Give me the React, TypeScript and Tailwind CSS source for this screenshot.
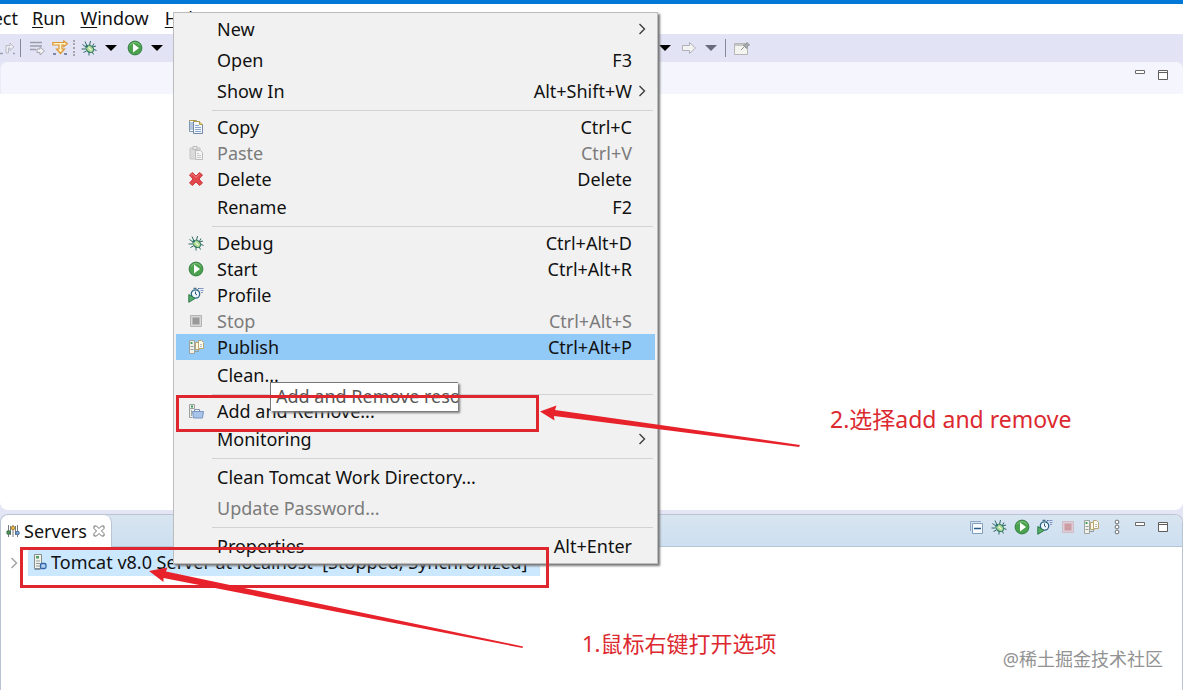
import React from "react";

type IconProps = { className?: string };

const svgBase = "block h-4 w-4 shrink-0";

function CopyIcon() {
  return (
    <svg viewBox="0 0 16 16" className={svgBase} aria-hidden="true">
      <path d="M1.500 1.500h7v11h-7z" fill="#fff" stroke="#7f96b5" />
      <path d="M1.500 1.500h6" stroke="#b39a3c" />
      <path d="M2 4h3M2 6h3M2 8h3M2 10h3" stroke="#6c8cba" />
      <path d="M5.500 2.500h6l3 3v9h-9z" fill="#f3f7fc" stroke="#7288a8" />
      <path d="M5.500 2.500h6l3 3" fill="none" stroke="#b0a04e" />
      <path d="M11.500 2.500v3h3" fill="#e6d68c" stroke="#b0a04e" />
      <path d="M7 6.500h4M7 8.500h6M7 10.500h6M7 12.500h6" stroke="#8aa6cc" />
    </svg>
  );
}

function PasteIcon() {
  return (
    <svg viewBox="0 0 16 16" className={svgBase} aria-hidden="true">
      <path d="M2 3h10v11H2z" fill="#dadada" stroke="#c6c6c6" />
      <path d="M5 1.500h4v3H5z" fill="#ededed" stroke="#b9b9b9" />
      <path d="M7.500 5.500h5l2 2v7h-7z" fill="#f3f3f3" stroke="#bcbcbc" />
      <path d="M9 8.500h2M9 10.500h4M9 12.500h4" stroke="#c9c9c9" />
    </svg>
  );
}

function DeleteIcon() {
  return (
    <svg viewBox="0 0 16 16" className={svgBase} aria-hidden="true">
      <path
        d="M1.500 4 4.500 1.500 8 5l3.500-3.500 3 2.500L11 8l3.500 4-3 2.500L8 11l-3.500 3.500-3-2.500L5 8z"
        fill="#e2474b"
        stroke="#c93a40"
        strokeLinejoin="round"
      />
      <path d="M3 4.300 4.500 3 8 6.500 11.500 3" fill="none" stroke="#f08a88" />
    </svg>
  );
}

function BugIcon() {
  return (
    <svg viewBox="0 0 16 16" className={svgBase} aria-hidden="true">
      <path
        d="M6 6 4 1.500M8.500 5.500 9.500 1M11 7l2-3.500M5 7 1.500 4.500M4.500 9H.5M5.500 11l-3 1.500M8 12v3.500M11 11.500l1.500 3M12 9l3.500 1.500M11.500 7 15 6"
        fill="none"
        stroke="#2f6a66"
      />
      <ellipse cx="8.800" cy="8.900" rx="4.200" ry="3.300" transform="rotate(38 8.800 8.900)" fill="#a9d792" stroke="#2f7462" />
      <path d="m7.500 7.500 3 2.800" stroke="#e9f7d2" strokeWidth="1.500" />
      <circle cx="5.800" cy="6.200" r="1.200" fill="#2c7475" />
    </svg>
  );
}

function RunIcon() {
  return (
    <svg viewBox="0 0 16 16" className={svgBase} aria-hidden="true">
      <circle cx="8" cy="8" r="6.900" fill="#4aa24e" stroke="#337f45" />
      <path d="M3 5.500a5.800 5.800 0 0 1 10 0" fill="none" stroke="#83c57c" />
      <path d="M6 3.500v9L12 8z" fill="#fff" />
    </svg>
  );
}

function ProfileIcon() {
  return (
    <svg viewBox="0 0 16 16" className={svgBase} aria-hidden="true">
      <circle cx="7.500" cy="7" r="4.200" fill="#edf7fc" stroke="#2d6685" strokeWidth="1.300" />
      <path d="M5.500 1.300h3M9.500 2.500l1.500-1.200M7.500 4.500V7l1.500 1" fill="none" stroke="#2a5274" />
      <path d="M11 1.500h4.500M12.500 3.500h3M13 5.500h2" stroke="#8297c7" />
      <path d="M.8 7.500v7.800L7 11.500z" fill="#55ad69" stroke="#2d7c48" />
    </svg>
  );
}

function StopIcon({ muted = false }: { muted?: boolean }) {
  return (
    <svg viewBox="0 0 16 16" className={svgBase} aria-hidden="true">
      <path d="M2.500 2.500h11v11h-11z" fill={muted ? "#dccdd6" : "#d8d8d8"} stroke={muted ? "#d0bcc6" : "#b4b4b4"} />
      <path d="M4.500 4.500h7v7h-7z" fill={muted ? "#cd9da4" : "#999"} />
    </svg>
  );
}

function PublishIcon() {
  return (
    <svg viewBox="0 0 16 16" className={svgBase} aria-hidden="true">
      <path d="M1.500 1.500h5v13h-5z" fill="#f2f2e8" stroke="#9ba3a3" />
      <path d="M2.500 7.500h3M2.500 10.500h3M6.500 12.500h4v-2" fill="none" stroke="#939d9c" />
      <path d="M2.500 3h2v2h-2z" fill="#48a263" />
      <path d="M7.500 3.500h4v7h-4z" fill="#fffbe7" stroke="#b9a673" />
      <path d="M10.500 1.500h3l2 2v6h-5z" fill="#fffdf2" stroke="#b9a673" />
      <path d="M12 5.500h2M12 7.500h2" stroke="#b4bbc0" />
    </svg>
  );
}

function AddRemoveIcon() {
  return (
    <svg viewBox="0 0 16 16" className={svgBase} aria-hidden="true">
      <path d="M1.500 1.500h5v4h-5zM1.500 5.500v9h3" fill="#eee" stroke="#9ba19d" />
      <path d="M3 2.500h2v2H3z" fill="#3c9b57" />
      <path d="M3.500 7v6" stroke="#a9aaa6" />
      <path d="M6.500 8V6.500h5V8" fill="#f3f5f9" stroke="#8290a6" />
      <path d="M4.500 8.500h11l-1 6.500h-9z" fill="#a8c4eb" stroke="#7895c3" />
    </svg>
  );
}

function StepIcon() {
  return (
    <svg viewBox="0 0 16 16" className={svgBase} aria-hidden="true">
      <path d="M0 13.500h3M13 13.500h2" stroke="#9ca0b5" strokeWidth="1.500" />
      <path d="M6 13V5.500h4V3l4 4-4 3.500V8H8.500v5z" fill="#ececf3" stroke="#babac7" />
    </svg>
  );
}

function SkipIcon() {
  return (
    <svg viewBox="0 0 16 16" className={svgBase} aria-hidden="true">
      <path d="M1 2.500h12M1 6h12M1 9.500h6" stroke="#9a9cab" strokeWidth="1.500" />
      <path d="M8 9h3V7l4.500 4L11 15v-2.500H8z" fill="#f3f3f7" stroke="#a2a4ad" />
    </svg>
  );
}

function FilterStepIcon() {
  return (
    <svg viewBox="0 0 16 16" className={svgBase} aria-hidden="true">
      <path d="M.8 2.500h11V1L15.500 3.700l-3.700 2.800V5H10v4h2.500L8.500 13.500 4.500 9H7V5H.8z" fill="#fff3cb" stroke="#dc9730" strokeWidth="1.200" />
      <path d="M1 14h3M12 14h3" stroke="#586a94" strokeWidth="1.600" />
    </svg>
  );
}

function ForwardIcon() {
  return (
    <svg viewBox="0 0 16 16" className={svgBase} aria-hidden="true">
      <path d="M1.500 5.500h7V2.500L14.500 8l-6 5.500v-3h-7z" fill="#f3f3f3" stroke="#b0b0b4" />
    </svg>
  );
}

function PinIcon() {
  return (
    <svg viewBox="0 0 18 16" className="block h-4 w-[18px] shrink-0" aria-hidden="true">
      <path d="M1.500 3.500h13v11h-13z" fill="#f3f3ef" stroke="#b5b5b6" />
      <path d="M2 5h8" stroke="#c6c6c6" strokeWidth="2" />
      <path d="m8 10 3-3M10 5l3.500 3.500 1-2.500 2-1-2.500-2.500-1 2z" fill="#a8adb0" stroke="#8f9598" />
    </svg>
  );
}

function Caret({ className = "text-black" }: IconProps) {
  return (
    <svg viewBox="0 0 12 6" className={`block h-1.5 w-3 shrink-0 ${className}`} aria-hidden="true">
      <path d="M0 0h12L6 6z" fill="currentColor" />
    </svg>
  );
}

function Chevron({ className = "h-3 w-2 text-[#3d3d3d]" }: IconProps) {
  return (
    <svg viewBox="0 0 8 12" className={`block shrink-0 ${className}`} aria-hidden="true">
      <path d="m1.500 1 5 5-5 5" fill="none" stroke="currentColor" strokeWidth="1.400" />
    </svg>
  );
}

function MinimizeIcon() {
  return (
    <svg viewBox="0 0 10 10" className="block h-2.5 w-2.5" aria-hidden="true">
      <path d="M.5.500h9v3h-9z" fill="#fff" stroke="#6d6a6a" />
    </svg>
  );
}

function MaximizeIcon() {
  return (
    <svg viewBox="0 0 10 10" className="block h-2.5 w-2.5" aria-hidden="true">
      <path d="M.5.500h9v9h-9zM.5 2.500h9" fill="#fff" stroke="#5f5c5c" />
    </svg>
  );
}

function CollapseIcon() {
  return (
    <svg viewBox="0 0 16 16" className={svgBase} aria-hidden="true">
      <path d="M2.500 12V2.500H13" fill="none" stroke="#8fa8c4" />
      <path d="M4.500 4.500h10v10h-10z" fill="#f7fbff" stroke="#829dbc" />
      <path d="M6 9.500h7" stroke="#28598d" strokeWidth="1.500" />
    </svg>
  );
}

function ViewMenuIcon() {
  return (
    <svg viewBox="0 0 6 16" className="block h-4 w-1.5 shrink-0" aria-hidden="true">
      <g fill="#fff" stroke="#6c6e70">
        <circle cx="3" cy="3" r="1.900" />
        <circle cx="3" cy="8" r="1.900" />
        <circle cx="3" cy="13" r="1.900" />
      </g>
    </svg>
  );
}

function ServersIcon() {
  return (
    <svg viewBox="0 0 14 14" className="block h-3.5 w-3.5 shrink-0" aria-hidden="true">
      <path d="M2.500 1v12M7 1v12M11.500 1v12M4.500 2v9M9.500 2v9" stroke="#777b7e" />
      <path d="M1 7h3v3H1z" fill="#54a35e" stroke="#356a45" />
      <circle cx="7" cy="4" r="1.800" fill="#eac34f" stroke="#a67b29" />
      <circle cx="11.500" cy="9" r="1.800" fill="#83abda" stroke="#41699a" />
    </svg>
  );
}

function ServerIcon() {
  return (
    <svg viewBox="0 0 16 18" className="block h-[18px] w-4 shrink-0" aria-hidden="true">
      <path d="M2.500 1.500h7v14h-7z" fill="#f4f4ec" stroke="#858e8b" />
      <path d="M4 8h4M4 10.500h4M4 13h4" stroke="#8d9997" />
      <path d="M4 3h3v2.500H4z" fill="#4ba066" />
      <rect x="8.500" y="10.500" width="5.500" height="5" rx="1.500" fill="#b4d0f2" stroke="#2f62a6" strokeWidth="1.300" />
      <path d="M2.500 16.500h6" stroke="#7a94b8" />
    </svg>
  );
}

function CloseIcon() {
  return (
    <svg viewBox="0 0 12 12" className="block h-3 w-3" aria-hidden="true">
      <path d="M1 1h2.500L6 3.500 8.500 1H11v2.500L8.500 6 11 8.500V11H8.500L6 8.500 3.500 11H1V8.500L3.500 6 1 3.500z" fill="#fff" stroke="#707070" />
    </svg>
  );
}

type Item = {
  label: string;
  keys?: string;
  icon?: React.ReactNode;
  sub?: boolean;
  disabled?: boolean;
  active?: boolean;
};

const groups: Item[][] = [
  [
    { label: "New", sub: true },
    { label: "Open", keys: "F3" },
    { label: "Show In", keys: "Alt+Shift+W", sub: true },
  ],
  [
    { label: "Copy", keys: "Ctrl+C", icon: <CopyIcon /> },
    { label: "Paste", keys: "Ctrl+V", icon: <PasteIcon />, disabled: true },
    { label: "Delete", keys: "Delete", icon: <DeleteIcon /> },
    { label: "Rename", keys: "F2" },
  ],
  [
    { label: "Debug", keys: "Ctrl+Alt+D", icon: <BugIcon /> },
    { label: "Start", keys: "Ctrl+Alt+R", icon: <RunIcon /> },
    { label: "Profile", icon: <ProfileIcon /> },
    { label: "Stop", keys: "Ctrl+Alt+S", icon: <StopIcon />, disabled: true },
    { label: "Publish", keys: "Ctrl+Alt+P", icon: <PublishIcon />, active: true },
    { label: "Clean..." },
  ],
  [
    { label: "Add and Remove...", icon: <AddRemoveIcon /> },
    { label: "Monitoring", sub: true },
  ],
  [{ label: "Clean Tomcat Work Directory..." }, { label: "Update Password...", disabled: true }],
  [{ label: "Properties", keys: "Alt+Enter" }],
];

function MenuRow({ item }: { item: Item }) {
  const height = item.icon ? "h-[26px]" : "h-[31px] pb-0.5";
  const tone = item.disabled ? "text-[#7b7b7b]" : "text-[#111]";
  const fill = item.active ? "bg-[#91c9f7]" : "";
  return (
    <button
      type="button"
      role="menuitem"
      disabled={item.disabled}
      className={`flex w-full items-center pr-[9px] pl-3 text-left ${height} ${tone} ${fill}`}
    >
      <span className="w-[29px] shrink-0">{item.icon}</span>
      <span className="flex-1">{item.label}</span>
      <span>{item.keys}</span>
      <span className="ml-1.5 w-2 shrink-0">{item.sub && <Chevron />}</span>
    </button>
  );
}

function ContextMenu() {
  return (
    <div
      role="menu"
      className="absolute top-3 left-[173px] w-[485px] border border-[#bdbdbd] bg-[#f1f1f1] px-0.5 py-px shadow-[2px_2px_2px_#777]"
    >
      {groups.map((group, i) => (
        <React.Fragment key={i}>
          {i > 0 && <div role="separator" className="my-[3px] mr-0.5 ml-9 h-px bg-[#d2d2d2]" />}
          {group.map((item) => (
            <MenuRow key={item.label} item={item} />
          ))}
        </React.Fragment>
      ))}
    </div>
  );
}

function ToolButton({ label, children, className = "" }: { label: string; children: React.ReactNode; className?: string }) {
  return (
    <button type="button" aria-label={label} className={`shrink-0 ${className}`}>
      {children}
    </button>
  );
}

export default function App() {
  return (
    <div className="relative flex min-h-screen flex-col overflow-hidden bg-[#e5e6f5] font-['Noto_Sans','Noto_Sans_CJK_SC',sans-serif] text-[18px] leading-6 text-[#111]">
      <div className="h-1 bg-[#0078d7]" />
      <nav className="flex h-[30px] items-center bg-white pb-0.5">
        <a href="#project" className="flex w-[18px] justify-end overflow-hidden">Project</a>
        <a href="#run" className="ml-3.5"><u className="underline-offset-2">R</u>un</a>
        <a href="#window" className="ml-[15px]"><u className="underline-offset-2">W</u>indow</a>
        <a href="#help" className="ml-4"><u className="underline-offset-2">H</u>elp</a>
      </nav>

      <div role="toolbar" aria-label="Main" className="flex h-7 items-center bg-[#e2e4f5]">
        <ToolButton label="Step return"><StepIcon /></ToolButton>
        <span className="ml-1 h-[18px] w-px bg-[#858999]" />
        <ToolButton label="Skip breakpoints" className="ml-2"><SkipIcon /></ToolButton>
        <ToolButton label="Use step filters" className="ml-[7px]"><FilterStepIcon /></ToolButton>
        <span className="ml-[5px] h-4 border-l-2 border-dotted border-[#a6a6b2]" />
        <ToolButton label="Debug" className="ml-1.5"><BugIcon /></ToolButton>
        <ToolButton label="Debug history" className="ml-2"><Caret /></ToolButton>
        <ToolButton label="Run" className="ml-[10px]"><RunIcon /></ToolButton>
        <ToolButton label="Run history" className="ml-2"><Caret /></ToolButton>
        <span className="w-[496px] shrink-0" />
        <ToolButton label="Back history"><Caret /></ToolButton>
        <ToolButton label="Forward" className="ml-[10px]"><ForwardIcon /></ToolButton>
        <ToolButton label="Forward history" className="ml-2"><Caret className="text-[#696a7c]" /></ToolButton>
        <span className="ml-2 h-[18px] w-px bg-[#858999]" />
        <ToolButton label="Pin editor" className="ml-[7px]"><PinIcon /></ToolButton>
      </div>

      <main className="flex-1 rounded-lg bg-white">
        <div className="flex h-8 items-start justify-end gap-[13px] rounded-t-lg border-l border-[#e9ebf5] bg-[#f4f5fd] pt-2 pr-[15px]">
          <ToolButton label="Minimize editor"><MinimizeIcon /></ToolButton>
          <ToolButton label="Maximize editor"><MaximizeIcon /></ToolButton>
        </div>
      </main>

      <section aria-label="Servers view" className="mt-1 h-[176px] rounded-t-lg border border-b-0 border-[#b9c5d4] bg-white">
        <div className="flex h-8 items-stretch rounded-t-lg border-b border-[#b5c6d8] bg-linear-to-b from-[#d8e5f1] to-[#cddff0]">
          <div className="-mb-px flex items-center rounded-t-lg border-r border-[#b9c5d4] bg-white pr-1.5 pl-[5px]">
            <ServersIcon />
            <span className="ml-1">Servers</span>
            <button type="button" aria-label="Close Servers" className="ml-1.5"><CloseIcon /></button>
          </div>
          <div className="ml-auto flex h-6 items-center gap-[7px] pr-3.5">
            <ToolButton label="Collapse all"><CollapseIcon /></ToolButton>
            <ToolButton label="Debug server"><BugIcon /></ToolButton>
            <ToolButton label="Start server"><RunIcon /></ToolButton>
            <ToolButton label="Profile server"><ProfileIcon /></ToolButton>
            <ToolButton label="Stop server"><StopIcon muted /></ToolButton>
            <ToolButton label="Publish to server"><PublishIcon /></ToolButton>
            <ToolButton label="View menu" className="ml-2"><ViewMenuIcon /></ToolButton>
            <ToolButton label="Minimize view" className="ml-2"><MinimizeIcon /></ToolButton>
            <ToolButton label="Maximize view" className="ml-1.5"><MaximizeIcon /></ToolButton>
          </div>
        </div>
        <div className="mt-[3px] flex h-[26px] items-center pl-[9px]">
          <button type="button" aria-label="Expand server" className="w-[18px]"><Chevron className="h-3 w-2 text-[#a0a0a0]" /></button>
          <div className="flex h-[26px] items-center bg-[#cce8ff] pr-3 pb-0.5 pl-1">
            <ServerIcon />
            <span className="ml-[3px] whitespace-pre">Tomcat v8.0 Server at localhost  [Stopped, Synchronized]</span>
          </div>
        </div>
      </section>

      <ContextMenu />

      <div role="tooltip" className="absolute top-[382px] left-[270px] h-[29px] w-[188px] overflow-hidden border-t border-l border-[#777] bg-white pl-[5px] leading-[27px] whitespace-nowrap text-[#575757] shadow-[2px_2px_2px_#777]">
        Add and Remove resources
      </div>

      <div className="absolute top-[395px] left-[176px] h-[37px] w-[363px] border-3 border-[#dd262d]" />
      <div className="absolute top-[547px] left-5 h-[41px] w-[529px] border-3 border-[#dd262d]" />
      <svg viewBox="0 0 264 44" className="absolute top-[404px] left-[539px] h-11 w-[264px]" aria-hidden="true">
        <path d="M1 7.500 17.500 1.500 16 6 261 41 260 43 15 12l.5 4.500z" fill="#e8222a" />
      </svg>
      <svg viewBox="0 0 380 84" className="absolute top-[566px] left-[147px] h-[84px] w-[380px]" aria-hidden="true">
        <path d="M2 5 20.500 1.500 19 5.500 376 80.500l-.5 1.500L16.500 12v4z" fill="#e8222a" />
      </svg>
      <p className="absolute top-[403px] left-[830px] text-[23px] leading-8 whitespace-nowrap text-[#dc2930]">2.选择add and remove</p>
      <p className="absolute top-[627px] left-[582px] text-[22px] leading-8 whitespace-nowrap text-[#dc2930]">1.鼠标右键打开选项</p>
      <p className="absolute right-5 bottom-[19px] text-[18px] leading-6 whitespace-nowrap text-[#929292]">@稀土掘金技术社区</p>
    </div>
  );
}
